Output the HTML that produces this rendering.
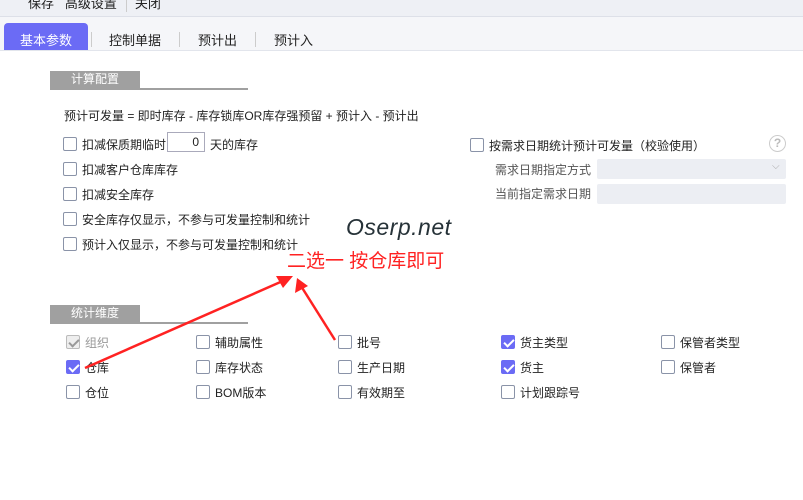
<!DOCTYPE html><html><head><meta charset="utf-8"><style>
body{margin:0;width:803px;height:500px;overflow:hidden;background:#fff;font-family:"Liberation Sans","Noto Sans CJK SC",sans-serif;font-size:12px;color:#222;position:relative}
.a{position:absolute;white-space:nowrap}
.cb{position:absolute;width:14px;height:14px;border:1px solid #8a93a8;border-radius:2px;background:#fff;box-sizing:border-box}
.ck{background:#6b6bf5;border-color:#6b6bf5}
.ck::after{content:"";position:absolute;left:4px;top:1px;width:4px;height:8px;border:solid #fff;border-width:0 2px 2px 0;transform:rotate(45deg)}
.dis{background:#eee;border-color:#bbb}
.dis::after{border-color:#999}
.sec{position:absolute;height:17px;background:#a0a0a0;color:#fff;font-size:12px;line-height:17px;padding-left:21px;box-sizing:border-box}
</style></head><body>
<div class="a" style="left:0;top:0;width:803px;height:16px;background:#eef0f5;border-bottom:1px solid #dde0e8"></div>
<div class="a" style="left:28px;top:-7px;font-size:13px">保存 &nbsp;&nbsp;高级设置 &nbsp;&nbsp;&nbsp;&nbsp;关闭</div>
<div class="a" style="left:126px;top:0;width:1px;height:12px;background:#ccc"></div>
<div class="a" style="left:0;top:17px;width:803px;height:33px;background:#f5f6f9"></div>
<div class="a" style="left:4px;top:23px;width:84px;height:27px;background:#6b6bf5;border-radius:4px 4px 0 0"></div>
<div class="a" style="left:20px;top:30px;color:#fff;font-size:13px">基本参数</div>
<div class="a" style="left:109px;top:30px;font-size:13px">控制单据</div>
<div class="a" style="left:198px;top:30px;font-size:13px">预计出</div>
<div class="a" style="left:274px;top:30px;font-size:13px">预计入</div>
<div class="a" style="left:91px;top:32px;width:1px;height:15px;background:#ccc"></div>
<div class="a" style="left:179px;top:32px;width:1px;height:15px;background:#ccc"></div>
<div class="a" style="left:255px;top:32px;width:1px;height:15px;background:#ccc"></div>
<div class="a" style="left:0;top:50px;width:803px;height:1px;background:#e2e5ec"></div>

<div class="sec" style="left:50px;top:71px;width:90px">计算配置</div>
<div class="a" style="left:50px;top:88px;width:198px;height:2px;background:#a0a0a0"></div>
<div class="a" style="left:64px;top:107px">预计可发量 = 即时库存 - 库存锁库OR库存强预留 + 预计入 - 预计出</div>

<div class="cb" style="left:63px;top:137px"></div><div class="a" style="left:82px;top:136px">扣减保质期临时</div>
<div class="a" style="left:167px;top:132px;width:38px;height:20px;border:1px solid #aab;box-sizing:border-box;text-align:right;padding-right:5px;line-height:18px">0</div>
<div class="a" style="left:210px;top:136px">天的库存</div>
<div class="cb" style="left:63px;top:162px"></div><div class="a" style="left:82px;top:161px">扣减客户仓库库存</div>
<div class="cb" style="left:63px;top:187px"></div><div class="a" style="left:82px;top:186px">扣减安全库存</div>
<div class="cb" style="left:63px;top:212px"></div><div class="a" style="left:82px;top:211px">安全库存仅显示，不参与可发量控制和统计</div>
<div class="cb" style="left:63px;top:237px"></div><div class="a" style="left:82px;top:236px">预计入仅显示，不参与可发量控制和统计</div>

<div class="cb" style="left:470px;top:138px"></div><div class="a" style="left:489px;top:137px">按需求日期统计预计可发量（校验使用）</div>
<div class="a" style="left:769px;top:135px;width:17px;height:17px;border:1px solid #ccc;border-radius:50%;box-sizing:border-box;color:#bbb;text-align:center;line-height:15px;font-weight:bold">?</div>
<div class="a" style="left:495px;top:161px;color:#555">需求日期指定方式</div>
<div class="a" style="left:597px;top:159px;width:189px;height:20px;background:#eceef3;border-radius:2px"></div>
<div class="a" style="left:772px;top:161px;color:#aaa;font-size:10px">⌵</div>
<div class="a" style="left:495px;top:185px;color:#555">当前指定需求日期</div>
<div class="a" style="left:597px;top:184px;width:189px;height:20px;background:#eceef3;border-radius:2px"></div>

<div class="sec" style="left:50px;top:305px;width:90px">统计维度</div>
<div class="a" style="left:50px;top:322px;width:198px;height:2px;background:#a0a0a0"></div>
<div class="cb ck dis" style="left:66px;top:335px"></div><div class="a" style="left:85px;top:334px;color:#999">组织</div>
<div class="cb ck" style="left:66px;top:360px"></div><div class="a" style="left:85px;top:359px">仓库</div>
<div class="cb" style="left:66px;top:385px"></div><div class="a" style="left:85px;top:384px">仓位</div>
<div class="cb" style="left:196px;top:335px"></div><div class="a" style="left:215px;top:334px">辅助属性</div>
<div class="cb" style="left:196px;top:360px"></div><div class="a" style="left:215px;top:359px">库存状态</div>
<div class="cb" style="left:196px;top:385px"></div><div class="a" style="left:215px;top:384px">BOM版本</div>
<div class="cb" style="left:338px;top:335px"></div><div class="a" style="left:357px;top:334px">批号</div>
<div class="cb" style="left:338px;top:360px"></div><div class="a" style="left:357px;top:359px">生产日期</div>
<div class="cb" style="left:338px;top:385px"></div><div class="a" style="left:357px;top:384px">有效期至</div>
<div class="cb ck" style="left:501px;top:335px"></div><div class="a" style="left:520px;top:334px">货主类型</div>
<div class="cb ck" style="left:501px;top:360px"></div><div class="a" style="left:520px;top:359px">货主</div>
<div class="cb" style="left:501px;top:385px"></div><div class="a" style="left:520px;top:384px">计划跟踪号</div>
<div class="cb" style="left:661px;top:335px"></div><div class="a" style="left:680px;top:334px">保管者类型</div>
<div class="cb" style="left:661px;top:360px"></div><div class="a" style="left:680px;top:359px">保管者</div>

<div class="a" style="left:346px;top:214px;font-size:23px;font-style:italic;color:#263238;letter-spacing:0.5px">Oserp.net</div>
<div class="a" style="left:287px;top:246px;font-size:19px;color:#f22">二选一 按仓库即可</div>
<svg class="a" style="left:0;top:0" width="803" height="500">
<line x1="85" y1="368" x2="285" y2="280" stroke="#f22" stroke-width="2.5"/>
<polygon points="293,276 276,276 283,288" fill="#f22"/>
<line x1="335" y1="340" x2="301" y2="286" stroke="#f22" stroke-width="2.5"/>
<polygon points="297,278 295,293 308,286" fill="#f22"/>
</svg>
</body></html>
